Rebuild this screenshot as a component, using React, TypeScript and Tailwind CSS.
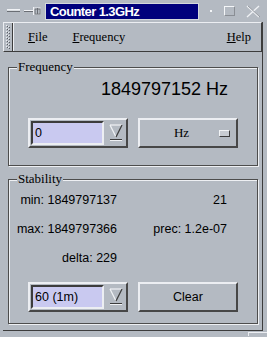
const raised =
  'border-2 border-t-[#eceef2] border-l-[#eceef2] border-r-[#474747] border-b-[#474747]';
const sunken =
  'border-2 border-t-[#3c3c3c] border-l-[#3c3c3c] border-r-[#eceef2] border-b-[#eceef2]';
const groove =
  'border border-[#4d4d4d] shadow-[inset_1px_1px_0_#eef0f3,1px_1px_0_#eef0f3]';

function ComboBox({ value }: { value: string }) {
  return (
    <div className={`w-[100px] h-[30px] flex items-center bg-[#b4bac2] ${raised}`}>
      <div
        className={`ml-[1px] w-[73px] h-[24px] bg-[#c9c9f0] flex items-center pl-[2px] text-[12.5px] text-black ${sunken}`}
      >
        {value}
      </div>
      <svg width="14" height="18" viewBox="0 0 14 18" className="ml-[5px]">
        <path d="M1 1 L13 1 L7 13 Z" fill="#b4bac2" />
        <path d="M1 1 L13 1" stroke="#f0f2f5" strokeWidth="1.2" />
        <path d="M1 1 L7 13" stroke="#f0f2f5" strokeWidth="1.2" />
        <path d="M13 1 L7 13" stroke="#3c3c3c" strokeWidth="1.2" />
        <rect x="1" y="15" width="12" height="1" fill="#3c3c3c" />
        <rect x="1" y="16" width="12" height="1" fill="#f0f2f5" />
      </svg>
    </div>
  );
}

export default function App() {
  return (
    <div
      className="w-[267px] h-[337px] bg-[#b4bac2] overflow-hidden text-black"
      style={{ fontFamily: '"Liberation Sans", Arial, sans-serif' }}
    >
      {/* title bar */}
      <div className="h-[22px] flex items-center">
        <svg width="13" height="4" viewBox="0 0 13 4" className="ml-[7px]">
          <rect x="0" y="0" width="13" height="1" fill="#f0f2f5" />
          <rect x="0" y="1" width="13" height="1" fill="#d8dce0" />
          <rect x="0" y="2" width="13" height="1" fill="#6a6e74" />
        </svg>
        <svg width="17" height="10" viewBox="0 0 17 10" className="ml-[4px]">
          <rect x="0" y="4" width="10" height="1" fill="#f0f2f5" />
          <rect x="0" y="5" width="10" height="1" fill="#6a6e74" />
          <rect x="9" y="1" width="1" height="8" fill="#f0f2f5" />
          <rect x="10" y="2" width="6" height="6" fill="#b4bac2" stroke="#f0f2f5" strokeWidth="1" />
          <rect x="11" y="3" width="5" height="5" fill="none" stroke="#6a6e74" strokeWidth="1" />
          <rect x="13" y="2" width="1" height="6" fill="#6a6e74" />
        </svg>
        <div className="ml-[4px] w-[154px] h-[17px] bg-[#00007c] border border-[#d4d8dc] flex items-center pl-[4px]">
          <span className="text-white font-bold text-[13px] tracking-[-0.6px] leading-none">
            Counter 1.3GHz
          </span>
        </div>
        <div className="ml-[11px] w-[2px] h-[2px] bg-[#f4f6f8]" />
        <div className="ml-[12px] w-[11px] h-[10px] border border-t-[#f4f6f8] border-l-[#f4f6f8] border-r-[#8a8e94] border-b-[#8a8e94]" />
        <svg width="14" height="13" viewBox="0 0 14 13" className="ml-[11px]">
          <path d="M1 1 L13 12 M13 1 L1 12" stroke="#f0f2f5" strokeWidth="1.3" />
          <path d="M2 1 L14 12" stroke="#8a8e94" strokeWidth="0.8" />
        </svg>
      </div>

      {/* window body */}
      <div className="ml-[3px] w-[260px] h-[309px] border-r border-b border-r-[#3c3c3c] border-b-[#3c3c3c]">
        {/* menu bar */}
        <div className="w-[259px] h-[30px] flex items-stretch border border-t-[#eceef2] border-l-[#eceef2] border-r-[#3c3c3c] border-b-[#3c3c3c]">
          <div className="w-[9px] border-r border-r-[#3c3c3c] shadow-[1px_0_0_#eceef2] flex items-center justify-center">
            <svg width="6" height="24" viewBox="0 0 6 24">
              {Array.from({ length: 8 }).map((_, i) => (
                <g key={i}>
                  <rect x="1" y={i * 3} width="1" height="1" fill="#eceef2" />
                  <rect x="2" y={i * 3 + 1} width="1" height="1" fill="#5a5e64" />
                  <rect x="3" y={i * 3 + 1} width="1" height="1" fill="#eceef2" />
                  <rect x="4" y={i * 3 + 2} width="1" height="1" fill="#5a5e64" />
                </g>
              ))}
            </svg>
          </div>
          <div
            className="flex-1 flex items-center text-[12.5px]"
            style={{ fontFamily: '"Liberation Serif", "Times New Roman", serif' }}
          >
            <span className="ml-[15px]">
              <span className="underline">F</span>ile
            </span>
            <span className="ml-[25px]">
              <span className="underline">F</span>requency
            </span>
            <span className="ml-auto mr-[10px]">
              <span className="underline">H</span>elp
            </span>
          </div>
        </div>

        {/* Frequency group */}
        <fieldset className={`ml-[5px] mt-[7px] w-[250px] pb-[17px] ${groove}`}>
          <legend
            className="ml-[8px] px-[1px] bg-[#b4bac2] text-[13px] leading-[16px]"
            style={{ fontFamily: '"Liberation Serif", "Times New Roman", serif' }}
          >
            Frequency
          </legend>
          <div className="mt-[4px] h-[20px] text-right pr-[29px] text-[18px] leading-[20px]">
            1849797152 Hz
          </div>
          <div className="mt-[19px] pl-[19px] flex gap-[10px]">
            <ComboBox value="0" />
            <div className={`w-[100px] h-[30px] flex items-center ${raised}`}>
              <span
                className="flex-1 text-center pl-[4px] text-[13px]"
                style={{ fontFamily: '"Liberation Serif", "Times New Roman", serif' }}
              >
                Hz
              </span>
              <div className="w-[11px] h-[7px] mr-[6px] border border-t-[#f2f4f6] border-l-[#f2f4f6] border-r-[#3c3c3c] border-b-[#3c3c3c] bg-[#c8ccd2]" />
            </div>
          </div>
        </fieldset>

        {/* Stability group */}
        <fieldset className={`ml-[5px] mt-[5px] w-[250px] pb-[11px] ${groove}`}>
          <legend
            className="ml-[8px] px-[1px] bg-[#b4bac2] text-[13px] leading-[16px]"
            style={{ fontFamily: '"Liberation Serif", "Times New Roman", serif' }}
          >
            Stability
          </legend>
          <div className="mt-[5px] grid grid-cols-[108px_110px] gap-y-[13px] text-[12.5px] leading-[16px]">
            <div className="text-right">min: 1849797137</div>
            <div className="text-right">21</div>
            <div className="text-right">max: 1849797366</div>
            <div className="text-right">prec: 1.2e-07</div>
            <div className="text-right">delta: 229</div>
            <div />
          </div>
          <div className="mt-[16px] pl-[19px] flex gap-[10px]">
            <ComboBox value="60 (1m)" />
            <div className={`w-[100px] h-[30px] flex items-center justify-center text-[12.5px] ${raised}`}>
              Clear
            </div>
          </div>
        </fieldset>
      </div>

      {/* resize corner */}
      <div className="flex justify-end">
        <div className="mt-[1px] w-[19px] h-[4px] border-l border-t border-l-[#eceef2] border-t-[#eceef2]" />
      </div>
    </div>
  );
}
